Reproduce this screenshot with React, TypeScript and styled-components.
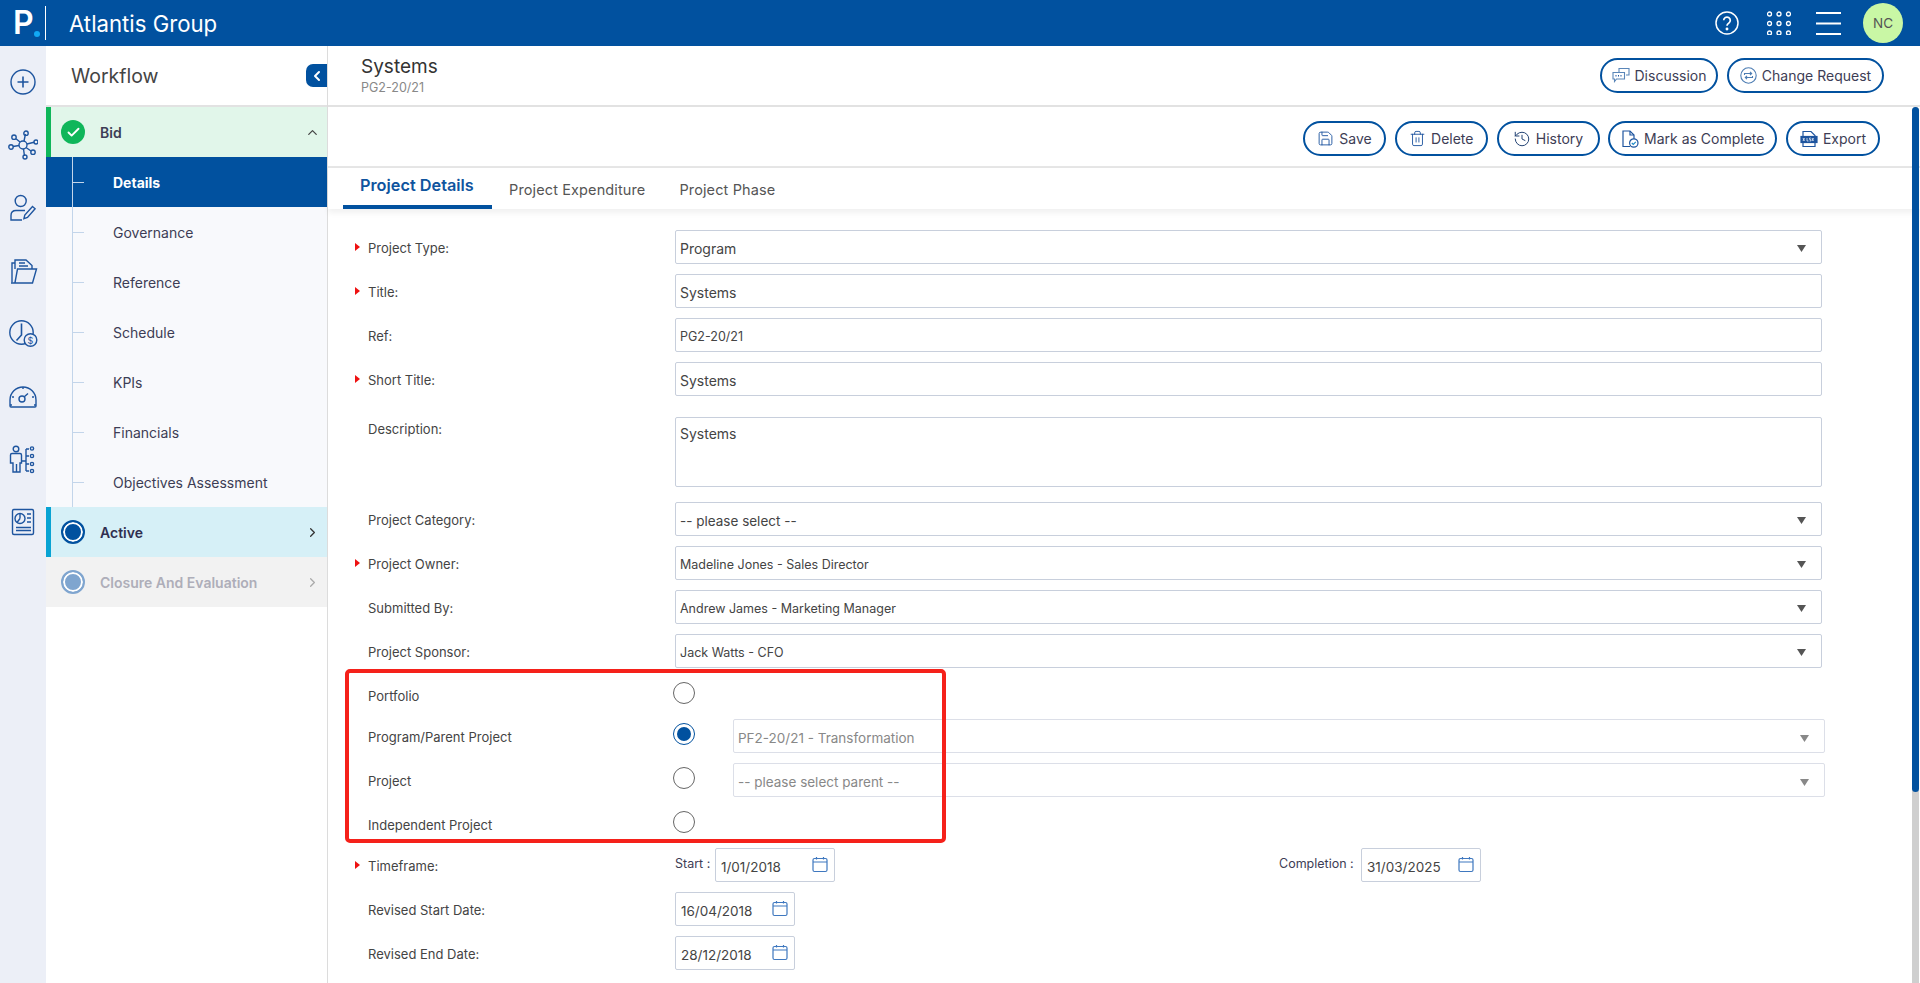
import React from "react";
import styled, { createGlobalStyle } from "styled-components";
import { Save, Trash2, History, Check, ChevronLeft, ChevronUp, ChevronRight } from "lucide-react";

const Global = createGlobalStyle`
  html, body { margin: 0; padding: 0; height: 100%; overflow: hidden; background: #fff; }
  * { box-sizing: border-box; }
  body { font-family: Inter, "Open Sans", "Liberation Sans", sans-serif; color: #444; }
`;

const BLUE = "#01519f";
const INK = "#1e559f";

const Page = styled.div`
  width: 1920px;
  height: 983px;
  display: flex;
  flex-direction: column;
  overflow: hidden;
  position: relative;
`;
const TopBar = styled.header`
  height: 46px;
  flex: none;
  background: ${BLUE};
  display: flex;
  align-items: center;
  color: #fff;
  padding-right: 17px;
`;
const Logo = styled.div`
  width: 46px;
  height: 34px;
  border-right: 1px solid #fff;
  margin-right: 23px;
  display: flex;
  align-items: center;
  padding-left: 13px;
  font-size: 32px;
  font-weight: 600;
  line-height: 1;
  span { display: block; width: 6px; height: 6px; border-radius: 50%; background: #11a9f5; margin: 22px 0 0 0; flex: none; }
`;
const Brand = styled.div`
  font-size: 22.2px;
  font-weight: 400;
  flex: 1;
`;
const TopIcon = styled.svg<{ $ml: number }>`
  display: block;
  flex: none;
  margin-left: ${(p) => p.$ml}px;
`;
const Avatar = styled.div`
  width: 40px;
  height: 40px;
  border-radius: 50%;
  background: #c9f7a5;
  color: #555;
  font-size: 13.5px;
  display: flex;
  align-items: center;
  justify-content: center;
  margin-left: 22px;
`;
const Body = styled.div`
  flex: 1;
  display: flex;
  min-height: 0;
`;
const Rail = styled.nav`
  width: 46px;
  flex: none;
  background: #eceff7;
  padding-top: 5px;
  display: flex;
  flex-direction: column;
`;
const RailItem = styled.div`
  height: 62.8px;
  display: flex;
  align-items: center;
  justify-content: center;
  svg { display: block; fill: none; stroke: ${INK}; stroke-width: 1.4; }
`;
const Side = styled.aside`
  width: 282px;
  flex: none;
  border-right: 1px solid #dcdcdc;
  display: flex;
  flex-direction: column;
`;
const SideHead = styled.div`
  height: 61px;
  flex: none;
  border-bottom: 2px solid #e2e2e2;
  display: flex;
  align-items: center;
  justify-content: space-between;
  padding: 0 0 0 25px;
  font-size: 19.5px;
  color: #444;
`;
const Collapse = styled.div`
  width: 21px;
  height: 23px;
  background: ${BLUE};
  border-radius: 7px 0 0 7px;
  display: flex;
  align-items: center;
  justify-content: center;
  color: #fff;
`;
const Tree = styled.div`
  position: relative;
  display: flex;
  flex-direction: column;
`;
const TreeLine = styled.div`
  position: absolute;
  left: 26px;
  top: 24px;
  height: 376px;
  width: 1px;
  background: #c3d5ea;
  z-index: 1;
`;
const Stage = styled.div<{ $bg: string; $bar: string; $fg: string }>`
  height: 50px;
  background: ${(p) => p.$bg};
  border-left: 5px solid ${(p) => p.$bar};
  display: flex;
  align-items: center;
  padding-left: 10px;
  padding-right: 7px;
  font-size: 14px;
  font-weight: 600;
  color: ${(p) => p.$fg};
  position: relative;
  z-index: 2;
`;
const StageLabel = styled.span`
  margin-left: 15px;
  flex: 1;
`;
const Dot = styled.span<{ $fill: string; $ring: string }>`
  width: 24px;
  height: 24px;
  border-radius: 50%;
  flex: none;
  background: ${(p) => p.$fill};
  border: 2px solid ${(p) => p.$ring};
  box-shadow: inset 0 0 0 2px #fff;
`;
const DoneDot = styled.span`
  width: 24px;
  height: 24px;
  border-radius: 50%;
  flex: none;
  background: #0fb65a;
  color: #fff;
  display: flex;
  align-items: center;
  justify-content: center;
`;
const SubItem = styled.div<{ $active?: boolean }>`
  height: 50px;
  display: flex;
  align-items: center;
  padding-left: 67px;
  font-size: 14px;
  font-weight: ${(p) => (p.$active ? 700 : 400)};
  background: ${(p) => (p.$active ? BLUE : "#f8f9fc")};
  color: ${(p) => (p.$active ? "#fff" : "#3d3d55")};
  position: relative;
  &::before {
    content: "";
    position: absolute;
    left: 26px;
    top: 25px;
    width: 12px;
    height: 1px;
    background: #c3d5ea;
  }
`;
const Main = styled.main`
  flex: 1;
  min-width: 0;
  display: flex;
  flex-direction: column;
  position: relative;
`;
const TitleBar = styled.div`
  height: 61px;
  flex: none;
  border-bottom: 2px solid #e2e2e2;
  display: flex;
  align-items: center;
  justify-content: space-between;
  padding: 0 36px 1px 33px;
`;
const Title = styled.div`
  font-size: 19px;
  line-height: 24px;
  color: #333;
`;
const SubTitle = styled.div`
  font-size: 12.5px;
  line-height: 17px;
  color: #888;
`;
const Actions = styled.div`
  display: flex;
  gap: 9px;
`;
const Toolbar = styled.div`
  height: 61px;
  flex: none;
  border-bottom: 2px solid #e6e6e6;
  display: flex;
  align-items: center;
  justify-content: flex-end;
  gap: 8.75px;
  padding: 4px 40px 0 0;
`;
const Pill = styled.button<{ $w: number }>`
  width: ${(p) => p.$w}px;
  height: 35px;
  border: 2px solid ${BLUE};
  border-radius: 18px;
  background: #fff;
  font: 400 14px Inter, sans-serif;
  color: #3d3d55;
  display: flex;
  align-items: center;
  justify-content: center;
  gap: 5px;
  padding: 0;
  svg { flex: none; display: block; }
`;
const Tabs = styled.div`
  height: 41px;
  flex: none;
  display: flex;
  padding-left: 15px;
  box-shadow: 0 4px 6px rgba(0, 0, 0, 0.06);
`;
const Tab = styled.div<{ $active?: boolean }>`
  padding: ${(p) => (p.$active ? "7px 0 0 17px" : "13px 17px 0")};
  width: ${(p) => (p.$active ? "149px" : "auto")};
  font-size: ${(p) => (p.$active ? "16.3px" : "14.5px")};
  font-weight: ${(p) => (p.$active ? 600 : 400)};
  letter-spacing: ${(p) => (p.$active ? "0" : "0.12px")};
  color: ${(p) => (p.$active ? "#0f549e" : "#555")};
  border-bottom: 4px solid ${(p) => (p.$active ? BLUE : "transparent")};
`;
const Form = styled.div`
  padding: 21px 0 0 27px;
  display: flex;
  flex-direction: column;
`;
const Row = styled.div<{ $mt?: number; $cols?: string }>`
  display: grid;
  grid-template-columns: ${(p) => p.$cols ?? "320px 1147px"};
  align-items: center;
  margin-top: ${(p) => p.$mt ?? 10}px;
  min-height: 34px;
`;
const Label = styled.div<{ $req?: boolean; $top?: boolean }>`
  font-size: 13px;
  color: #444;
  padding: 1px 0 0 13px;
  position: relative;
  align-self: ${(p) => (p.$top ? "start" : "center")};
  margin-top: ${(p) => (p.$top ? "3px" : "0")};
  &::before {
    content: "";
    display: ${(p) => (p.$req ? "block" : "none")};
    position: absolute;
    left: 0;
    top: 50%;
    margin-top: -4px;
    width: 5px;
    height: 8px;
    background: #ee1111;
    clip-path: polygon(0 0, 100% 50%, 0 100%);
  }
`;
const Field = styled.div<{ $h?: number; $size?: number; $off?: boolean }>`
  height: ${(p) => p.$h ?? 34}px;
  border: 1px solid ${(p) => (p.$off ? "#dcdfe8" : "#c8cfdc")};
  border-radius: 2px;
  background: #fff;
  padding: 3px 5px 0 4px;
  font-size: ${(p) => p.$size ?? 13.5}px;
  color: ${(p) => (p.$off ? "#888" : "#444")};
  display: flex;
  align-items: center;
  justify-content: space-between;
  position: relative;
`;
const Area = styled(Field)`
  align-items: flex-start;
  padding-top: 7px;
`;
const Caret = styled.span`
  width: 9px;
  height: 7px;
  background: #555;
  clip-path: polygon(0 0, 100% 0, 50% 100%);
  margin-right: 10px;
  flex: none;
`;
const OffCaret = styled(Caret)`
  background: #888;
  margin-top: 2px;
`;
const RadioDot = styled.span<{ $on?: boolean }>`
  width: 22px;
  height: 22px;
  border-radius: 50%;
  border: 1px solid ${(p) => (p.$on ? BLUE : "#666")};
  background: #fff;
  margin-left: -2px;
  position: relative;
  display: block;
  transform: translateY(-2px);
  &::after {
    content: "";
    display: ${(p) => (p.$on ? "block" : "none")};
    position: absolute;
    inset: 3px;
    border-radius: 50%;
    background: ${BLUE};
  }
`;
const Group = styled.div`
  position: relative;
  display: flex;
  flex-direction: column;
`;
const Frame = styled.div`
  position: absolute;
  left: -10px;
  top: 1px;
  width: 601px;
  height: 174px;
  border: 4px solid #f5211a;
  border-radius: 5px;
  pointer-events: none;
`;
const Inline = styled.div`
  font-size: 12.5px;
  color: #3d3d55;
  white-space: nowrap;
  transform: translateY(-2px);
`;
const DateField = styled(Field)`
  width: 120px;
  font-size: 13.5px;
  padding-left: 5px;
  svg { margin: -5px 1px 0 0; }
`;
const Track = styled.div`
  position: absolute;
  right: 1px;
  top: 61px;
  bottom: 0;
  width: 7px;
  background: #cfcfcf;
  border-radius: 4px 4px 0 0;
`;
const Thumb = styled.div`
  height: 685px;
  background: ${BLUE};
  border-radius: 4px;
`;

const Cal = () => (
  <svg width="16" height="17" viewBox="0 0 16 17" fill="none" stroke="#3f78bf" strokeWidth="1.2">
    <rect x="1" y="2.5" width="14" height="13" rx="1.5" />
    <path d="M1 6h14M4.5 1v2.5M11.5 1v2.5" />
  </svg>
);
const Sel = ({ children, size }: { children: React.ReactNode; size?: number }) => (
  <Field $size={size}>
    {children}
    <Caret />
  </Field>
);
const Off = ({ children }: { children: React.ReactNode }) => (
  <Field $off>
    {children}
    <OffCaret />
  </Field>
);
const Dated = ({ children }: { children: React.ReactNode }) => (
  <DateField>
    {children}
    <Cal />
  </DateField>
);

const DiscussionIcon = () => (
  <svg width="18" height="16" viewBox="0 0 18 16" fill="none" stroke="#5a86b8" strokeWidth="1.1">
    <path d="M7 5V1.5h10V8h-3" />
    <path d="M1 5.5h11.5V12H4.5L2.5 14.5V12H1z" fill="#fff" />
    <path d="M3.5 8.8h1M6 8.8h1M8.5 8.8h1" stroke="#1e559f" strokeWidth="1.4" />
  </svg>
);
const ChangeIcon = () => (
  <svg width="17" height="17" viewBox="0 0 17 17" fill="none" stroke="#4d7db3" strokeWidth="1.1">
    <circle cx="8.5" cy="8.5" r="7.7" />
    <path d="M4.5 8V6.5h7M10 4.8l1.7 1.7L10 8.2M12.5 9v1.5h-7M7 12.2l-1.7-1.7L7 8.8" />
  </svg>
);
const CompleteIcon = () => (
  <svg width="18" height="18" viewBox="0 0 18 18" fill="none" stroke="#1e559f" strokeWidth="1.2">
    <path d="M9 16.5H2V1h7l4 4v4" />
    <path d="M9 1v4h4" />
    <circle cx="12.8" cy="13" r="4.2" fill="#fff" />
    <path d="M10.8 13l1.5 1.5 2.5-2.6" stroke="#1e8ac8" />
  </svg>
);
const ExportIcon = () => (
  <svg width="18" height="18" viewBox="0 0 18 18" fill="none" stroke="#1e559f" strokeWidth="1.2">
    <path d="M3 6V1.5h8l4 4V6M3 13v3.5h12V13" />
    <rect x="1" y="6.5" width="16" height="6" fill="#1e559f" />
    <path d="M3 8l1.5 3M4.5 8L3 11M7 8v3h1.5M12 8l1.5 3M13.5 8L12 11M10.8 8H9.6v1.5h1.2V11H9.6" stroke="#fff" strokeWidth=".7" />
  </svg>
);

export default function App() {
  return (
    <Page>
      <Global />
      <TopBar>
        <Logo>
          P<span />
        </Logo>
        <Brand>Atlantis Group</Brand>
        <TopIcon $ml={0} width="24" height="24" viewBox="0 0 24 24" fill="none" stroke="#fff" strokeWidth="1.5">
          <circle cx="12" cy="12" r="11" />
          <path d="M8.7 9.3a3.3 3.3 0 1 1 5 2.9c-1 .6-1.7 1.2-1.7 2.6" strokeWidth="1.7" />
          <circle cx="12" cy="18" r=".7" fill="#fff" />
        </TopIcon>
        <TopIcon $ml={28} width="24" height="24" viewBox="0 0 24 24" fill="none" stroke="#fff" strokeWidth="1.3">
          {[3, 12.5, 22].flatMap((y) =>
            [2.5, 12, 21.5].map((x) => <circle key={`${x}-${y}`} cx={x} cy={y} r="2" />)
          )}
        </TopIcon>
        <TopIcon $ml={25} width="25" height="24" viewBox="0 0 25 24" fill="none" stroke="#fff" strokeWidth="2">
          <path d="M0 2h25M0 12.5h25M0 23h25" />
        </TopIcon>
        <Avatar>NC</Avatar>
      </TopBar>
      <Body>
        <Rail>
          <RailItem>
            <svg width="30" height="30" viewBox="0 0 30 30">
              <circle cx="15" cy="15" r="12" />
              <path d="M15 9.5v11M9.5 15h11" strokeWidth="1.6" />
            </svg>
          </RailItem>
          <RailItem>
            <svg width="30" height="30" viewBox="0 0 30 30">
              <circle cx="15" cy="15" r="4" />
              <path d="M16 11l1.5-7M12 12l-4-3.2M19 14l7-1.8M11 15.5l-6 1M18 17.5l5 3.5M15.5 19l1 7" />
              <circle cx="18" cy="3.2" r="2.2" />
              <circle cx="6" cy="7.2" r="2.2" />
              <circle cx="28" cy="12" r="2" />
              <circle cx="3" cy="17" r="2.2" />
              <circle cx="25" cy="22.2" r="2.2" />
              <circle cx="17" cy="27" r="2" />
            </svg>
          </RailItem>
          <RailItem>
            <svg width="30" height="30" viewBox="0 0 30 30">
              <circle cx="12.7" cy="8" r="5.5" />
              <path d="M17 17.5H8c-3 0-5 2-5 5v4.500h11" />
              <path d="M24.500 13.500l2.600 2.300L19.500 24.500l-3.600 1.200.9-3.600z" />
            </svg>
          </RailItem>
          <RailItem>
            <svg width="30" height="30" viewBox="0 0 30 30">
              <path d="M4 26.500V7h3" />
              <path d="M7 26.500L9.500 13H28.500L24.500 27H3" />
              <path d="M7 13V4H18l6 5.500V13" />
              <path d="M11 7h6M11 10h9" />
            </svg>
          </RailItem>
          <RailItem>
            <svg width="30" height="30" viewBox="0 0 30 30">
              <circle cx="13.500" cy="13.500" r="11.700" />
              <path d="M13.500 4.500V16l-5 5.500" strokeWidth="1.6" />
              <circle cx="22.500" cy="21" r="6.300" style={{ fill: "#eceff7" }} />
              <text x="22.500" y="24.500" textAnchor="middle" fontSize="9" fill="#1e559f" stroke="none" fontFamily="Inter, sans-serif">$</text>
            </svg>
          </RailItem>
          <RailItem>
            <svg width="30" height="30" viewBox="0 0 30 30">
              <path d="M3 26h24c.7 0 1-.4 1-1v-6a13 13 0 0 0-26 0v6c0 .6.3 1 1 1z" />
              <circle cx="14" cy="18" r="3" />
              <path d="M16 16l4-3.500M15 6v2M4 16h2M26 16h-2M2 24h2M28 24h-2" />
            </svg>
          </RailItem>
          <RailItem>
            <svg width="30" height="30" viewBox="0 0 30 30">
              <circle cx="8" cy="5" r="2.800" />
              <path d="M4 9.500h8c1 0 1.500.5 1.500 1.500v8H12v9H8.500v-8 8H5v-9H2.500v-8c0-1 .5-1.500 1.500-1.500z" />
              <path d="M14 17h3.500M18 5v22M18 5h3M18 12h3M18 20h3M18 27h3" />
              <circle cx="24" cy="4.500" r="1.600" />
              <circle cx="24" cy="12" r="1.600" />
              <circle cx="24" cy="20" r="1.600" />
              <circle cx="24" cy="27" r="1.600" />
            </svg>
          </RailItem>
          <RailItem>
            <svg width="30" height="30" viewBox="0 0 30 30">
              <rect x="4.500" y="2.500" width="21" height="25" rx="1.500" />
              <circle cx="12" cy="11.500" r="5" />
              <path d="M12 11.500V6.500M12 11.500L9 15.500M19 7h4M19 11h4M19 15h4M8 20.500h15M8 23.500h15" />
            </svg>
          </RailItem>
        </Rail>
        <Side>
          <SideHead>
            Workflow
            <Collapse>
              <ChevronLeft size={16} strokeWidth={3} />
            </Collapse>
          </SideHead>
          <Tree>
            <TreeLine />
            <Stage $bg="#e1f6ea" $bar="#0fb65a" $fg="#3d3d55">
              <DoneDot>
                <Check size={15} strokeWidth={3} />
              </DoneDot>
              <StageLabel>Bid</StageLabel>
              <ChevronUp size={15} color="#444" />
            </Stage>
            <SubItem $active>Details</SubItem>
            <SubItem>Governance</SubItem>
            <SubItem>Reference</SubItem>
            <SubItem>Schedule</SubItem>
            <SubItem>KPIs</SubItem>
            <SubItem>Financials</SubItem>
            <SubItem>Objectives Assessment</SubItem>
            <Stage $bg="#d6f0f7" $bar="#08a3d3" $fg="#2f2f50">
              <Dot $fill={BLUE} $ring={BLUE} />
              <StageLabel>Active</StageLabel>
              <ChevronRight size={15} color="#333" />
            </Stage>
            <Stage $bg="#f2f2f2" $bar="#f2f2f2" $fg="#aeaeb9">
              <Dot $fill="#7fa5cf" $ring="#7fa5cf" />
              <StageLabel>Closure And Evaluation</StageLabel>
              <ChevronRight size={15} color="#aaa" />
            </Stage>
          </Tree>
        </Side>
        <Main>
          <TitleBar>
            <div>
              <Title>Systems</Title>
              <SubTitle>PG2-20/21</SubTitle>
            </div>
            <Actions>
              <Pill $w={118}>
                <DiscussionIcon />
                Discussion
              </Pill>
              <Pill $w={157}>
                <ChangeIcon />
                Change Request
              </Pill>
            </Actions>
          </TitleBar>
          <Toolbar>
            <Pill $w={83}>
              <Save size={17} strokeWidth={1.3} color={INK} />
              Save
            </Pill>
            <Pill $w={93}>
              <Trash2 size={17} strokeWidth={1.3} color={INK} />
              Delete
            </Pill>
            <Pill $w={103}>
              <History size={18} strokeWidth={1.3} color="#1e3f70" />
              History
            </Pill>
            <Pill $w={169}>
              <CompleteIcon />
              Mark as Complete
            </Pill>
            <Pill $w={94}>
              <ExportIcon />
              Export
            </Pill>
          </Toolbar>
          <Tabs>
            <Tab $active>Project Details</Tab>
            <Tab>Project Expenditure</Tab>
            <Tab>Project Phase</Tab>
          </Tabs>
          <Form>
            <Row $mt={0}>
              <Label $req>Project Type:</Label>
              <Sel size={14}>Program</Sel>
            </Row>
            <Row>
              <Label $req>Title:</Label>
              <Field $size={14}>Systems</Field>
            </Row>
            <Row>
              <Label>Ref:</Label>
              <Field $size={12.5}>PG2-20/21</Field>
            </Row>
            <Row>
              <Label $req>Short Title:</Label>
              <Field $size={14}>Systems</Field>
            </Row>
            <Row $mt={21}>
              <Label $top>Description:</Label>
              <Area $h={70} $size={14}>Systems</Area>
            </Row>
            <Row $mt={15}>
              <Label>Project Category:</Label>
              <Sel>-- please select --</Sel>
            </Row>
            <Row>
              <Label $req>Project Owner:</Label>
              <Sel size={12.5}>Madeline Jones - Sales Director</Sel>
            </Row>
            <Row>
              <Label>Submitted By:</Label>
              <Sel size={12.5}>Andrew James - Marketing Manager</Sel>
            </Row>
            <Row>
              <Label>Project Sponsor:</Label>
              <Sel size={12.5}>Jack Watts - CFO</Sel>
            </Row>
            <Group>
              <Row>
                <Label>Portfolio</Label>
                <div>
                  <RadioDot />
                </div>
              </Row>
              <Row $mt={7} $cols="320px 58px 1092px">
                <Label>Program/Parent Project</Label>
                <RadioDot $on />
                <Off>PF2-20/21 - Transformation</Off>
              </Row>
              <Row $cols="320px 58px 1092px">
                <Label>Project</Label>
                <RadioDot />
                <Off>-- please select parent --</Off>
              </Row>
              <Row>
                <Label>Independent Project</Label>
                <div>
                  <RadioDot />
                </div>
              </Row>
              <Frame />
            </Group>
            <Row $mt={7} $cols="320px 40px 120px 444px 82px 120px">
              <Label $req>Timeframe:</Label>
              <Inline>Start :</Inline>
              <Dated>1/01/2018</Dated>
              <span />
              <Inline>Completion :</Inline>
              <Dated>31/03/2025</Dated>
            </Row>
            <Row $cols="320px 120px">
              <Label>Revised Start Date:</Label>
              <Dated>16/04/2018</Dated>
            </Row>
            <Row $cols="320px 120px">
              <Label>Revised End Date:</Label>
              <Dated>28/12/2018</Dated>
            </Row>
          </Form>
          <Track>
            <Thumb />
          </Track>
        </Main>
      </Body>
    </Page>
  );
}
